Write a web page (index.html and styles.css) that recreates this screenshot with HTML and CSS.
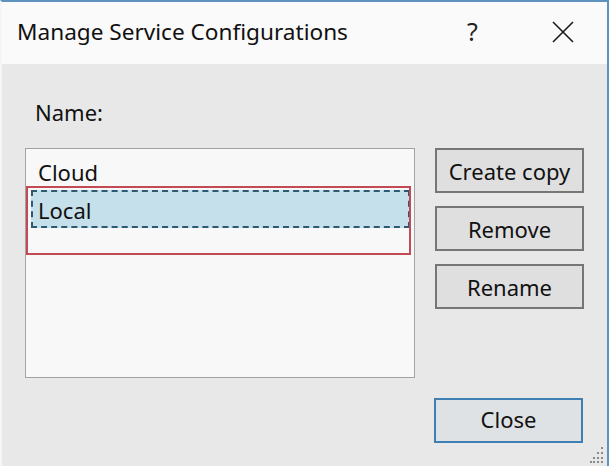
FILE: index.html
```html
<!DOCTYPE html>
<html>
<head>
<meta charset="utf-8">
<link rel="stylesheet" href="styles.css">
</head>
<body>
<div class="window">
  <div class="titlebar">
    <span class="title">Manage Service Configurations</span>
    <span class="help">?</span>
    <svg class="close-x" width="22" height="22" viewBox="0 0 22 22"><path d="M1 1 L21 21 M21 1 L1 21" stroke="#1a1a1a" stroke-width="1.6" fill="none"/></svg>
  </div>
  <div class="client">
    <div class="label">Name:</div>
    <div class="main">
      <div class="listbox">
        <div class="row">Cloud</div>
        <div class="row selected">Local</div>
        <div class="annot"></div>
      </div>
      <div class="buttons">
        <button class="btn">Create copy</button>
        <button class="btn">Remove</button>
        <button class="btn">Rename</button>
      </div>
    </div>
    <div class="footer">
      <button class="btn default">Close</button>
    </div>
    <svg class="grip" width="14" height="18" viewBox="0 0 14 18">
      <g fill="#8a8a8a">
        <rect x="11" y="1" width="2" height="2"/>
        <rect x="11" y="6" width="2" height="2"/><rect x="7" y="6" width="2" height="2"/>
        <rect x="11" y="11" width="2" height="2"/><rect x="7" y="11" width="2" height="2"/><rect x="3" y="11" width="2" height="2"/>
        <rect x="11" y="15" width="2" height="2"/><rect x="7" y="15" width="2" height="2"/><rect x="3" y="15" width="2" height="2"/><rect x="0" y="15" width="2" height="2"/>
      </g>
    </svg>
  </div>
</div>
</body>
</html>
```
FILE: styles.css
```css
html, body {
  margin: 0;
  padding: 0;
  background: #ffffff;
}
body {
  font-family: "Noto Sans", "Open Sans", sans-serif;
  color: #111;
}
.window {
  box-sizing: border-box;
  width: 609px;
  height: 466px;
  border-top: 2px solid #5f93bd;
  border-right: 2px solid #5f93bd;
  border-left: 2px solid #f6f6f6;
  display: flex;
  flex-direction: column;
}
.titlebar {
  height: 62px;
  background: #fafafa;
  display: flex;
  align-items: center;
  padding-left: 15px;
  font-size: 22.6px;
}
.title {
  flex: 1;
  padding-bottom: 3px;
}
.help {
  width: 20px;
  margin-right: 65px;
  padding-bottom: 4px;
  font-size: 25px;
  color: #222;
}
.close-x {
  margin-right: 33px;
  margin-bottom: 2px;
}
.client {
  position: relative;
  flex: 1;
  background: #e8e8e8;
  padding: 33px 0 0 23px;
  display: flex;
  flex-direction: column;
  font-size: 22px;
}
.label {
  line-height: 30px;
  padding-left: 10px;
}
.main {
  margin-top: 21px;
  display: flex;
  gap: 20px;
}
.listbox {
  position: relative;
  box-sizing: border-box;
  width: 390px;
  height: 230px;
  background: #f8f8f8;
  border: 1px solid #a3a3a3;
  padding: 3px 4px 0 5px;
}
.row {
  box-sizing: border-box;
  height: 38px;
  line-height: 36px;
  padding-left: 5px;
  border: 2px dashed transparent;
}
.row.selected {
  background: #c5e0ea;
  border: 2px dashed #2c5a72;
}
.annot {
  position: absolute;
  left: 0;
  top: 37px;
  width: 385px;
  height: 69px;
  border: 2px solid #c14a55;
  box-sizing: border-box;
}
.buttons {
  display: flex;
  flex-direction: column;
  gap: 13px;
}
.btn {
  box-sizing: border-box;
  width: 149px;
  height: 45px;
  background: #dfdfdf;
  border: 2px solid #767676;
  font-family: "Noto Sans", "Open Sans", sans-serif;
  font-size: 22px;
  color: #111;
  padding: 0;
}
.footer {
  display: flex;
  justify-content: flex-start;
  padding-left: 409px;
  margin-top: 20px;
}
.btn.default {
  border: 2px solid #3f7fb3;
  background: #dfe2e5;
  padding-bottom: 3px;
}
.grip {
  position: absolute;
  right: 3px;
  bottom: 2px;
}
```
